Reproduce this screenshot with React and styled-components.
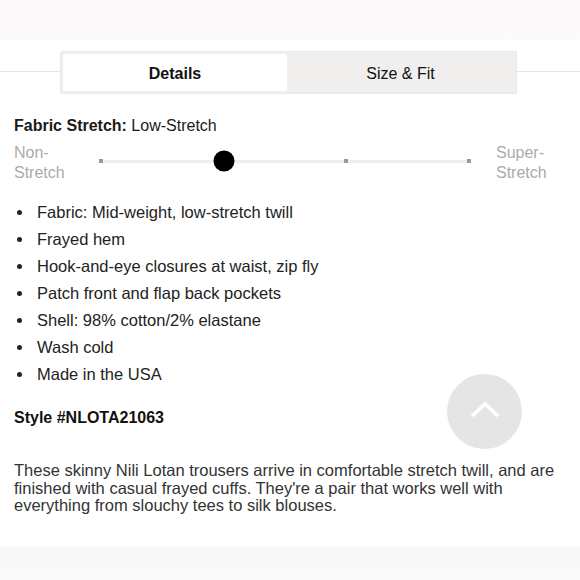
import { useState } from "react";
import styled, { createGlobalStyle } from "styled-components";

const GlobalStyle = createGlobalStyle`
  html, body {
    margin: 0;
    padding: 0;
    background: #ffffff;
  }
  body {
    font-family: "Liberation Sans", Arial, sans-serif;
    color: #222;
  }
`;

const features = [
  "Fabric: Mid-weight, low-stretch twill",
  "Frayed hem",
  "Hook-and-eye closures at waist, zip fly",
  "Patch front and flap back pockets",
  "Shell: 98% cotton/2% elastane",
  "Wash cold",
  "Made in the USA",
];

// 0 = Non-Stretch ... 3 = Super-Stretch
const STRETCH_LEVEL = 1;
const STOPS = [0, 1, 2, 3];

export default function App() {
  const [tab, setTab] = useState("details");

  return (
    <Page>
      <GlobalStyle />
      <TopBand />

      <TabRow>
        <Rule $fixed />
        <Tabs>
          <Tab $active={tab === "details"} onClick={() => setTab("details")}>
            Details
          </Tab>
          <Tab $active={tab === "size"} onClick={() => setTab("size")}>
            Size &amp; Fit
          </Tab>
        </Tabs>
        <Rule />
      </TabRow>

      <Content>
        <StretchTitle>
          <b>Fabric Stretch:</b> Low-Stretch
        </StretchTitle>

        <SliderRow>
          <EndLabel>
            Non-
            <br />
            Stretch
          </EndLabel>
          <Track>
            {STOPS.map((s) =>
              s === STRETCH_LEVEL ? (
                <Knob key={s} style={{ left: `${(s / 3) * 100}%` }} />
              ) : (
                <Tick key={s} style={{ left: `${(s / 3) * 100}%` }} />
              )
            )}
          </Track>
          <EndLabel $right>
            Super-
            <br />
            Stretch
          </EndLabel>
        </SliderRow>

        <FeatureList>
          {features.map((f) => (
            <Feature key={f}>{f}</Feature>
          ))}
        </FeatureList>

        <StyleNo>Style #NLOTA21063</StyleNo>

        <Description>
          These skinny Nili Lotan trousers arrive in comfortable stretch twill,
          and are finished with casual frayed cuffs. They're a pair that works
          well with everything from slouchy tees to silk blouses.
        </Description>
      </Content>

      <BottomBand />

      <ScrollTop aria-label="Back to top">
        <svg width="30" height="17" viewBox="0 0 30 17">
          <polyline
            points="2,15 15,3 28,15"
            fill="none"
            stroke="#ffffff"
            strokeWidth="3.6"
          />
        </svg>
      </ScrollTop>
    </Page>
  );
}

/* ---------------- styled-components ---------------- */
const Page = styled.div`
  position: relative;
  display: flex;
  flex-direction: column;
  min-height: 580px;
  width: 580px;
  overflow: hidden;
`;

const TopBand = styled.div`
  height: 40px;
  background: linear-gradient(180deg, #faf8f8 0%, #fcfafa 100%);
`;

const TabRow = styled.div`
  display: flex;
  align-items: center;
  margin-top: 11px;
`;

const Rule = styled.div`
  flex: ${({ $fixed }) => ($fixed ? "0 0 60px" : "1")};
  height: 1px;
  background: #e4e4e4;
  margin-top: -3px;
`;

const Tabs = styled.div`
  display: grid;
  grid-template-columns: 224px 1fr;
  width: 457px;
  height: 43px;
  box-sizing: border-box;
  padding: 2px;
  background: #f0efee;
  border: 1px solid #eae9e8;
  border-radius: 2px;
`;

const Tab = styled.button`
  border: none;
  border-radius: 2px;
  background: ${({ $active }) => ($active ? "#ffffff" : "transparent")};
  font-family: "Liberation Sans", Arial, sans-serif;
  font-size: 16px;
  font-weight: ${({ $active }) => ($active ? 700 : 400)};
  color: #111;
  cursor: pointer;
  padding: 2px 0 0;
`;

const Content = styled.div`
  display: flex;
  flex-direction: column;
  padding: 0 14px;
`;

const StretchTitle = styled.div`
  margin-top: 22px;
  font-size: 16px;
  line-height: 20px;
  color: #1a1a1a;

  b {
    font-weight: 700;
  }
`;

const SliderRow = styled.div`
  display: flex;
  align-items: center;
  margin-top: 7px;
`;

const EndLabel = styled.div`
  width: ${({ $right }) => ($right ? "auto" : "87px")};
  margin-left: ${({ $right }) => ($right ? "27px" : "0")};
  font-size: 16px;
  line-height: 20px;
  color: #ababab;
`;

const Track = styled.div`
  position: relative;
  width: 368px;
  height: 3px;
  margin-bottom: 4px;
  background: #eeeeee;
`;

const Tick = styled.span`
  position: absolute;
  top: 50%;
  width: 4px;
  height: 4px;
  background: #9a9a9a;
  transform: translate(-50%, -50%);
`;

const Knob = styled.span`
  position: absolute;
  top: 50%;
  width: 21px;
  height: 21px;
  border-radius: 50%;
  background: #000;
  transform: translate(-50%, -50%);
`;

const FeatureList = styled.ul`
  list-style: none;
  margin: 16px 0 0;
  padding: 0 0 0 3px;
`;

const Feature = styled.li`
  display: flex;
  align-items: center;
  gap: 15px;
  font-size: 16.5px;
  line-height: 27px;
  color: #222;

  &::before {
    content: "";
    width: 5px;
    height: 5px;
    border-radius: 50%;
    background: #222;
    flex-shrink: 0;
  }
`;

const StyleNo = styled.div`
  margin-top: 20px;
  font-size: 16px;
  line-height: 20px;
  font-weight: 700;
  color: #111;
`;

const Description = styled.p`
  margin: 34px 0 0;
  font-size: 16.5px;
  line-height: 17.5px;
  color: #333;
`;

const BottomBand = styled.div`
  margin-top: auto;
  height: 33px;
  background: linear-gradient(180deg, #f7f7f7 0%, #fafafa 100%);
`;

const ScrollTop = styled.button`
  position: absolute;
  left: 447px;
  top: 374px;
  width: 75px;
  height: 75px;
  border: none;
  border-radius: 50%;
  background: #e5e5e5;
  display: flex;
  align-items: center;
  justify-content: center;
  padding: 0 0 4px;
  cursor: pointer;
`;
